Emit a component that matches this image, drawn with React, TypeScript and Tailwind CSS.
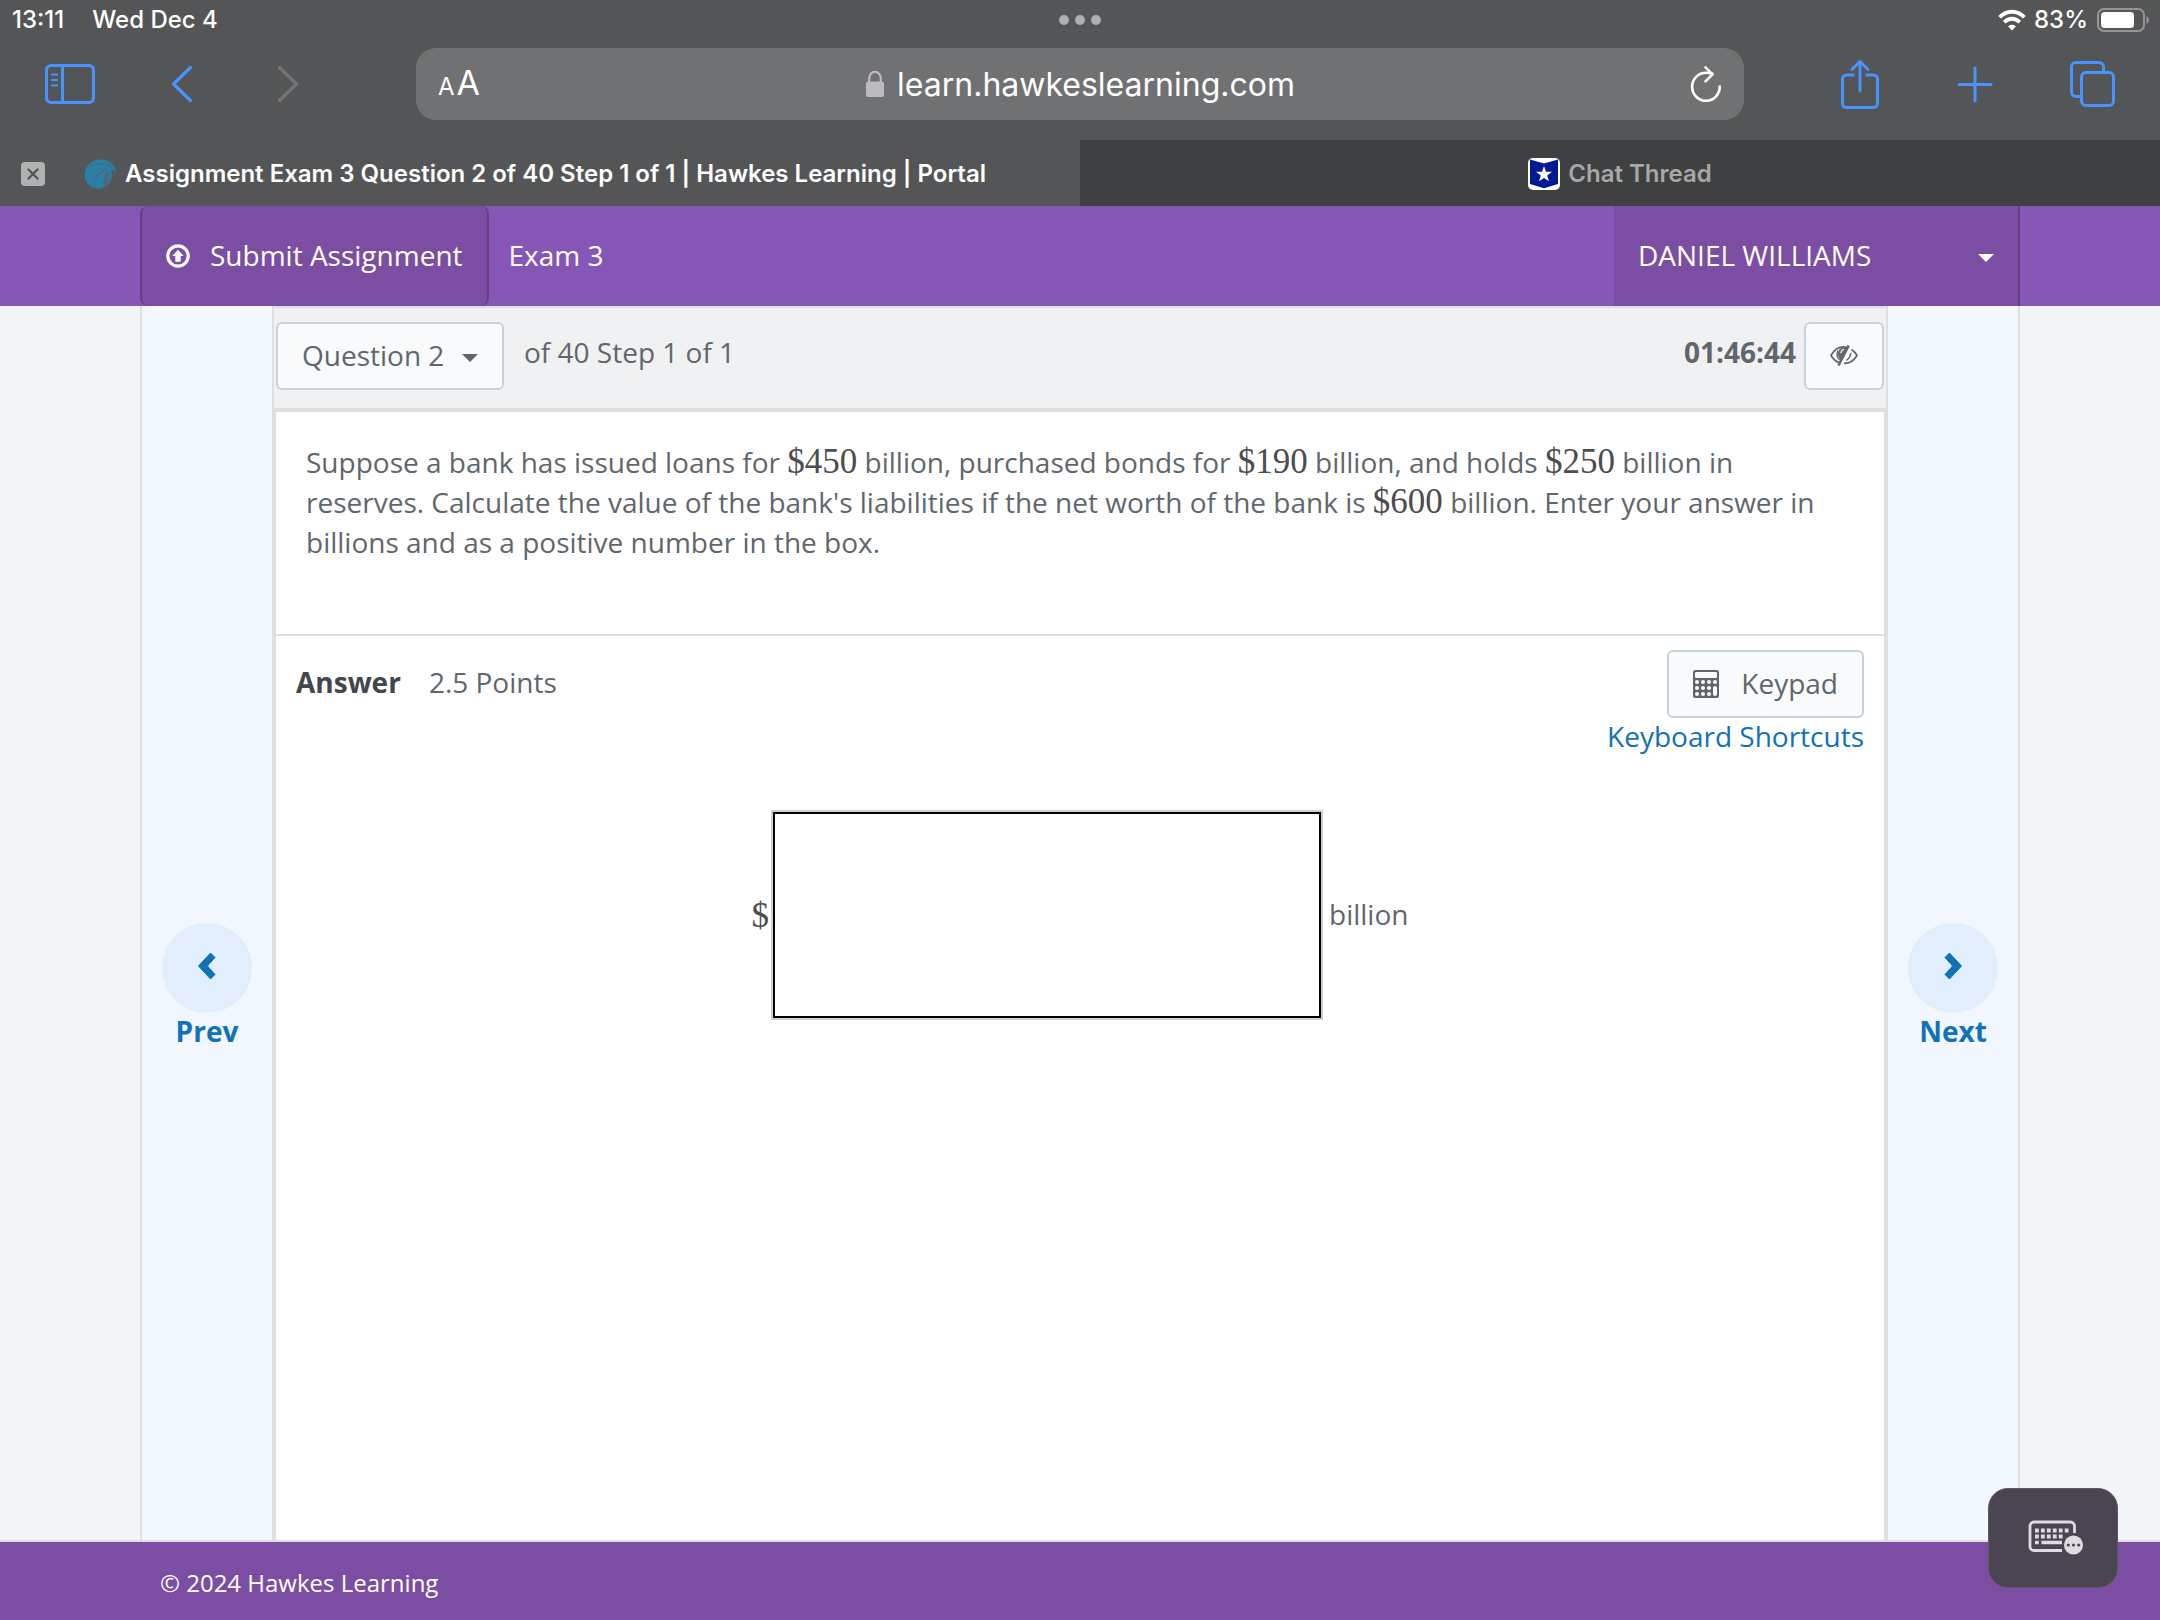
import type { ReactNode } from "react";

function SidebarIcon() {
  return (
    <svg width="52" height="42" viewBox="0 0 52 42" fill="none" stroke="currentColor" strokeWidth="3" strokeLinecap="round">
      <rect x="2.5" y="2.5" width="47" height="37" rx="4.5" />
      <path d="M18.5 3v36" strokeLinecap="butt" />
      <path d="M8 11.5h5M8 17h5M8 22.500h5" strokeWidth="2.2" />
    </svg>
  );
}

function ThinChevron({ flip = false }: { flip?: boolean }) {
  return (
    <svg width="22" height="40" viewBox="0 0 22 40" fill="none" stroke="currentColor" strokeWidth="3.2" strokeLinecap="round" strokeLinejoin="round">
      <path d={flip ? "M2.500 3.500 19.500 20 2.500 36.500" : "M19.500 3.500 2.500 20l17 16.500"} />
    </svg>
  );
}

function LockIcon() {
  return (
    <svg width="20" height="28" viewBox="0 0 20 28" fill="none" className="text-[#bbbcc2]">
      <rect x="1" y="11.500" width="18" height="15.500" rx="2.500" fill="currentColor" />
      <path d="M4.200 13V8.200a5.800 6.300 0 0 1 11.600 0V13" stroke="currentColor" strokeWidth="2.200" />
    </svg>
  );
}

function ReloadIcon() {
  return (
    <svg width="32" height="40" viewBox="0 0 32 40" fill="none" stroke="currentColor" strokeWidth="2.600" strokeLinecap="round" strokeLinejoin="round">
      <path d="M29.700 22.500A13.800 14 0 1 1 16 8.800c2.400 0 4.400.3 6.300 1" />
      <path d="m15.500 3.300 7 7-7 7" />
    </svg>
  );
}

function ShareIcon() {
  return (
    <svg width="42" height="52" viewBox="0 0 42 52" fill="none" stroke="currentColor" strokeWidth="3" strokeLinecap="butt" strokeLinejoin="round">
      <path d="M15.500 17H7.500A4 4 0 0 0 3.500 21v24.500a4 4 0 0 0 4 4h27a4 4 0 0 0 4-4V21a4 4 0 0 0-4-4h-8" />
      <path d="M21 33V4M13 11.500 21 3.500l8 8" strokeLinecap="round" />
    </svg>
  );
}

function PlusIcon() {
  return (
    <svg width="38" height="38" viewBox="0 0 38 38" fill="none" stroke="currentColor" strokeWidth="3" strokeLinecap="round">
      <path d="M19 3v33M3 19.500h32" />
    </svg>
  );
}

function TabsIcon() {
  return (
    <svg width="48" height="48" viewBox="0 0 48 48" fill="none" stroke="currentColor" strokeWidth="3">
      <path d="M34.500 12V7a4.500 4.500 0 0 0-4.500-4.500H7A4.500 4.500 0 0 0 2.500 7v25A4.500 4.500 0 0 0 7 36.500h5" />
      <rect x="12.500" y="12.500" width="32" height="33" rx="4.500" />
    </svg>
  );
}

function WifiIcon() {
  return (
    <svg width="28" height="22" viewBox="0 0 28 22" fill="none" stroke="currentColor" strokeWidth="3.800">
      <path d="M1.700 8.200C8.500.900 19.500.900 26.300 8.200" />
      <path d="M6.300 13.200c4.300-4.600 11.100-4.600 15.400 0" />
      <path d="M14 21.500l-4-4.200c2.300-2.100 5.700-2.100 8 0z" fill="currentColor" stroke="none" />
    </svg>
  );
}

function BatteryIcon() {
  return (
    <svg width="54" height="26" viewBox="0 0 54 26" fill="none">
      <rect x="2" y="2" width="46" height="22" rx="6" stroke="#949596" strokeWidth="2" />
      <rect x="5" y="5" width="33" height="16" rx="3.500" fill="white" />
      <path d="M50.500 9c3.500 1.500 3.500 6.500 0 8z" fill="#949596" />
    </svg>
  );
}

function HawkIcon() {
  return (
    <svg width="33" height="30" viewBox="0 0 33 30">
      <path d="M1 19C-1 8 7 0 18 .500c7 .300 12.500 4 14 12.500-2-1.500-3.500-2-5-1.700C30 18 26 27 17 29.500 9 30.500 2.500 26 1 19z" fill="#2a7fa6" />
      <path d="M6 8C12 3.500 20 3.500 26 7" fill="none" stroke="#3d6f88" strokeWidth="1.200" />
      <path d="M4 15c6-5 13-7 20-4.500-8 2.500-13 8-15.500 16.500 2-9 6-14 12-17-6-.500-11 1-16.500 5z" fill="#50646f" />
      <path d="M20 28c-2-6-1-11 4.500-16 2 5 1 11-3 15.500z" fill="#4a6a7b" />
    </svg>
  );
}

function StarBadgeIcon() {
  return (
    <svg width="32" height="32" viewBox="0 0 32 32">
      <rect width="32" height="32" rx="5" fill="white" />
      <path d="M2 1.500 16 5.500l14-4V26l-14 4.200L2 26z" fill="#001a96" />
      <path d="m16 8 2 5.700 6 .1-4.800 3.700 1.700 5.800L16 19.900l-4.900 3.400 1.700-5.800L8 13.800l6-.1z" fill="white" />
    </svg>
  );
}

function UploadIcon() {
  return (
    <svg width="24" height="24" viewBox="0 0 24 24" fill="none">
      <circle cx="12" cy="12" r="10.200" stroke="currentColor" strokeWidth="3.200" />
      <path d="M12 5.700 17.700 12h-3v5.800H9.300V12h-3z" fill="currentColor" />
    </svg>
  );
}

function Caret({ className = "" }: { className?: string }) {
  return (
    <svg width="16" height="8" viewBox="0 0 16 8" className={className}>
      <path d="M0 0h16L8 8z" fill="currentColor" />
    </svg>
  );
}

function EyeCloseIcon() {
  return (
    <svg width="28" height="22" viewBox="0 0 28 22" fill="none" stroke="currentColor">
      <path d="M17 2.300C9.500.700 4 5 1 10.500c2 3.500 5 6 8.500 7.500" strokeWidth="1.700" />
      <path d="M21.500 4.500c2.300 1.500 4.300 3.700 5.500 6-3 5-7.500 8-13 7.800" strokeWidth="1.700" />
      <path d="M8 5.500C6.500 9 7 12.500 9.500 15M21 8c-.500 3-2 5.500-4.500 7.500" strokeWidth="1.400" />
      <path d="M18.700.500 8.500 20.500" strokeWidth="2.600" />
      <path d="M9 5c2-2.500 5-3 8-2L10.500 15C7.500 12 7.500 8 9 5z" fill="currentColor" stroke="none" />
      <path d="M14 4.200c-2 .6-3 2-3.200 4" stroke="#f8fafc" strokeWidth="1.200" />
    </svg>
  );
}

const keypadDots = [11, 17, 23].flatMap((y) => [4, 10, 16, 22].filter((x) => !(x === 22 && y > 11)).map((x) => ({ x, y })));

function CalculatorIcon() {
  return (
    <svg width="26" height="28" viewBox="0 0 26 28">
      <rect width="26" height="28" rx="2.500" fill="currentColor" />
      <rect x="2" y="2" width="22" height="6" rx="1" fill="#f8fafc" />
      {keypadDots.map(({ x, y }) => (
        <circle key={`${x}-${y}`} cx={x} cy={y + 1} r="2" fill="#f8fafc" />
      ))}
      <rect x="20" y="16" width="4" height="10" rx="2" fill="#f8fafc" />
    </svg>
  );
}

function KeyboardIcon() {
  return (
    <svg width="56" height="36" viewBox="0 0 56 36" fill="none" className="text-[#dedce1]">
      <path d="M46.500 13V6a4 4 0 0 0-4-4H6a4 4 0 0 0-4 4v20.500a4 4 0 0 0 4 4h28" stroke="currentColor" strokeWidth="2.800" />
      <path d="M7 10.500h34.500M7 16.500h28" stroke="currentColor" strokeWidth="4" strokeDasharray="3.800 2.150" />
      <path d="M7 22.500h3.800M13.500 22.500H34" stroke="currentColor" strokeWidth="3.600" />
      <circle cx="45.500" cy="25" r="9.500" fill="currentColor" />
      <g fill="#4b4552">
        <circle cx="40.300" cy="25" r="1.600" />
        <circle cx="45.500" cy="25" r="1.600" />
        <circle cx="50.700" cy="25" r="1.600" />
      </g>
    </svg>
  );
}

function Money({ children }: { children: ReactNode }) {
  return <span className="font-['Liberation_Serif',serif] text-[35px] leading-none text-[#4d4d4d]">{children}</span>;
}

function StepButton({ label, next = false }: { label: string; next?: boolean }) {
  return (
    <nav aria-label={label} className="flex w-[130px] shrink-0 flex-col items-center pt-[617px]">
      <button type="button" className="flex flex-col items-center text-[#1072b8]">
        <span className="flex size-[90px] items-center justify-center rounded-full bg-[#e2eefe]">
          <svg width="18" height="28" viewBox="0 0 18 28" className="mb-1">
            <path d={next ? "M5.500 1 17.500 14 5.500 27 1 22.500 8.500 14 1 5.500z" : "M12.500 1 .500 14l12 13L17 22.500 9.500 14 17 5.500z"} fill="currentColor" stroke="currentColor" strokeLinejoin="round" strokeWidth="1" />
          </svg>
        </span>
        <span className="text-[28px] leading-9 font-bold">{label}</span>
      </button>
    </nav>
  );
}

function BrowserChrome() {
  return (
    <header className="bg-[#545556] font-['Inter',sans-serif] text-white">
      <div className="grid h-10 grid-cols-3 items-center px-2.5 text-[24px] leading-10 font-medium">
        <div className="flex gap-7 pl-0.5">
          <span>13:11</span>
          <span>Wed Dec 4</span>
        </div>
        <div className="flex justify-center gap-1.5">
          <span className="size-2.5 rounded-full bg-[#adaeaf]" />
          <span className="size-2.5 rounded-full bg-[#adaeaf]" />
          <span className="size-2.5 rounded-full bg-[#adaeaf]" />
        </div>
        <div className="flex items-center justify-end gap-2">
          <WifiIcon />
          <span>83%</span>
          <BatteryIcon />
        </div>
      </div>

      <div className="flex h-[100px] items-start pt-2">
        <div className="flex h-[72px] w-[416px] shrink-0 items-center pl-11 text-[#4794ff]">
          <button type="button" aria-label="Show sidebar">
            <SidebarIcon />
          </button>
          <button type="button" aria-label="Back" className="ml-[75px]">
            <ThinChevron />
          </button>
          <button type="button" aria-label="Forward" className="ml-[84px] text-[#737475]">
            <ThinChevron flip />
          </button>
        </div>
        <div className="flex h-[72px] min-w-0 flex-1 items-center rounded-[20px] bg-[#707172] px-5">
          <button type="button" aria-label="Page settings" className="flex w-20 items-baseline gap-0.5 pt-0.5 pl-0.5">
            <span className="text-[24px] leading-8">A</span>
            <span className="text-[34px] leading-8">A</span>
          </button>
          <div className="flex flex-1 items-center justify-center gap-3">
            <LockIcon />
            <input aria-label="Address" readOnly defaultValue="learn.hawkeslearning.com" className="field-sizing-content h-12 bg-transparent text-[32px] outline-none" />
          </div>
          <div className="flex w-20 justify-end pr-0.5">
            <button type="button" aria-label="Reload">
              <ReloadIcon />
            </button>
          </div>
        </div>
        <div className="flex h-[72px] w-[416px] shrink-0 items-center justify-end pr-[43px] text-[#4794ff]">
          <button type="button" aria-label="Share">
            <ShareIcon />
          </button>
          <button type="button" aria-label="New tab" className="ml-[75px]">
            <PlusIcon />
          </button>
          <button type="button" aria-label="All tabs" className="ml-[75px]">
            <TabsIcon />
          </button>
        </div>
      </div>

      <div className="grid h-[66px] grid-cols-2 text-[24px] font-semibold">
        <div className="flex items-center pt-0.5 pl-[21px]">
          <button type="button" aria-label="Close tab" className="flex size-6 items-center justify-center rounded bg-[#b0b1b2]">
            <svg width="12" height="12" viewBox="0 0 12 12" stroke="#545556" strokeWidth="2.400" strokeLinecap="round">
              <path d="m1.500 1.500 9 9M10.500 1.500l-9 9" />
            </svg>
          </button>
          <a href="#exam" className="ml-[39px] flex items-center gap-2">
            <HawkIcon />
            <span>Assignment Exam 3 Question 2 of 40 Step 1 of 1 | Hawkes Learning | Portal</span>
          </a>
        </div>
        <a href="#chat" className="flex items-center justify-center gap-2 bg-[#3f4041] pt-0.5 text-[#a6a7a8]">
          <StarBadgeIcon />
          <span>Chat Thread</span>
        </a>
      </div>
    </header>
  );
}

export default function App() {
  return (
    <div className="flex min-h-screen flex-col bg-[#f1f5f8] font-['Open_Sans',sans-serif] text-[28px] leading-10 text-[#5f676c]">
      <BrowserChrome />

      <div className="bg-[#8656b7] text-white">
        <div className="mx-auto flex h-[100px] w-full max-w-[1880px] items-stretch">
          <button type="button" className="flex items-center gap-5 rounded-lg border-x-2 border-[#643f86] bg-[#7b4ea3] px-6">
            <UploadIcon />
            <span className="pb-0.5">Submit Assignment</span>
          </button>
          <h1 className="flex items-center pb-0.5 pl-5">Exam 3</h1>
          <button type="button" aria-haspopup="menu" className="ml-auto flex w-[406px] items-center justify-between border-r-2 border-[#643f86] bg-[#7b4ea3] px-6">
            <span className="pb-0.5">DANIEL WILLIAMS</span>
            <Caret className="mt-1" />
          </button>
        </div>
      </div>

      <div className="mx-auto flex w-full max-w-[1880px] flex-1 border-x-2 border-[#dfdfdf] bg-[#f1f6ff]">
        <StepButton label="Prev" />

        <main className="flex min-w-0 flex-1 flex-col border-x-2 border-[#dfdfdf]">
          <div className="flex h-[106px] items-start border-t-2 border-b-4 border-[#dfdfdf] bg-[#eff1f3] px-0.5 pt-3.5">
            <div className="relative">
              <select aria-label="Question" className="h-[68px] w-[228px] appearance-none rounded-md border-2 border-[#c5d3dc] bg-[#f8fafc] pb-0.5 pl-6">
                <option>Question 2</option>
              </select>
              <Caret className="pointer-events-none absolute top-8 right-[26px]" />
            </div>
            <span className="mt-2.5 ml-5">of 40 Step 1 of 1</span>
            <time className="mt-2.5 ml-auto font-bold">01:46:44</time>
            <button type="button" aria-label="Hide timer" className="ml-2 flex h-[68px] w-20 items-center justify-center rounded-md border-2 border-[#c5d3dc] bg-[#f8fafc]">
              <EyeCloseIcon />
            </button>
          </div>

          <div className="flex-1 border-x-2 border-[#dfdfdf] bg-white">
            <section className="h-[224px] border-b-2 border-[#dfdfdf] pt-[30px] pr-10 pl-[30px]">
              <p>
                Suppose a bank has issued loans for <Money>$450</Money> billion, purchased bonds for <Money>$190</Money> billion, and holds <Money>$250</Money> billion in reserves. Calculate the value of the bank's liabilities if the net worth of the bank is <Money>$600</Money> billion. Enter your answer in billions and as a positive number in the box.
              </p>
            </section>

            <section className="px-5 pt-3.5">
              <div className="flex items-start justify-between">
                <div className="flex gap-7 pt-3">
                  <h2 className="font-bold text-[#41474b]">Answer</h2>
                  <span>2.5 Points</span>
                </div>
                <div className="flex flex-col items-end">
                  <button type="button" className="flex h-[68px] items-center gap-[22px] rounded-md border-2 border-[#c5d3dc] bg-[#f8fafc] px-6">
                    <CalculatorIcon />
                    <span className="pb-0.5">Keypad</span>
                  </button>
                  <a href="#shortcuts" className="leading-9 text-[#1072b8]">
                    Keyboard Shortcuts
                  </a>
                </div>
              </div>

              <div className="mt-14 flex items-center justify-center">
                <Money>$</Money>
                <input aria-label="Answer in billions" className="mx-0.5 h-[210px] w-[552px] border-2 border-[#d0d0d0] px-4 outline-2 -outline-offset-4 outline-black" />
                <span className="ml-1 pb-0.5">billion</span>
              </div>
            </section>
          </div>
        </main>

        <StepButton label="Next" next />
      </div>

      <footer className="border-t-2 border-[#dfdfdf] bg-[#7b4ea3] text-[24px] text-white">
        <div className="mx-auto flex h-[78px] w-full max-w-[1880px] items-center px-5 pt-1">© 2024 Hawkes Learning</div>
      </footer>

      <button type="button" aria-label="Keyboard options" className="fixed right-[42px] bottom-8 flex h-[100px] w-[130px] items-center justify-center rounded-[20px] border border-[#5d5963] bg-[#4b4552] pl-1.5">
        <KeyboardIcon />
      </button>
    </div>
  );
}
